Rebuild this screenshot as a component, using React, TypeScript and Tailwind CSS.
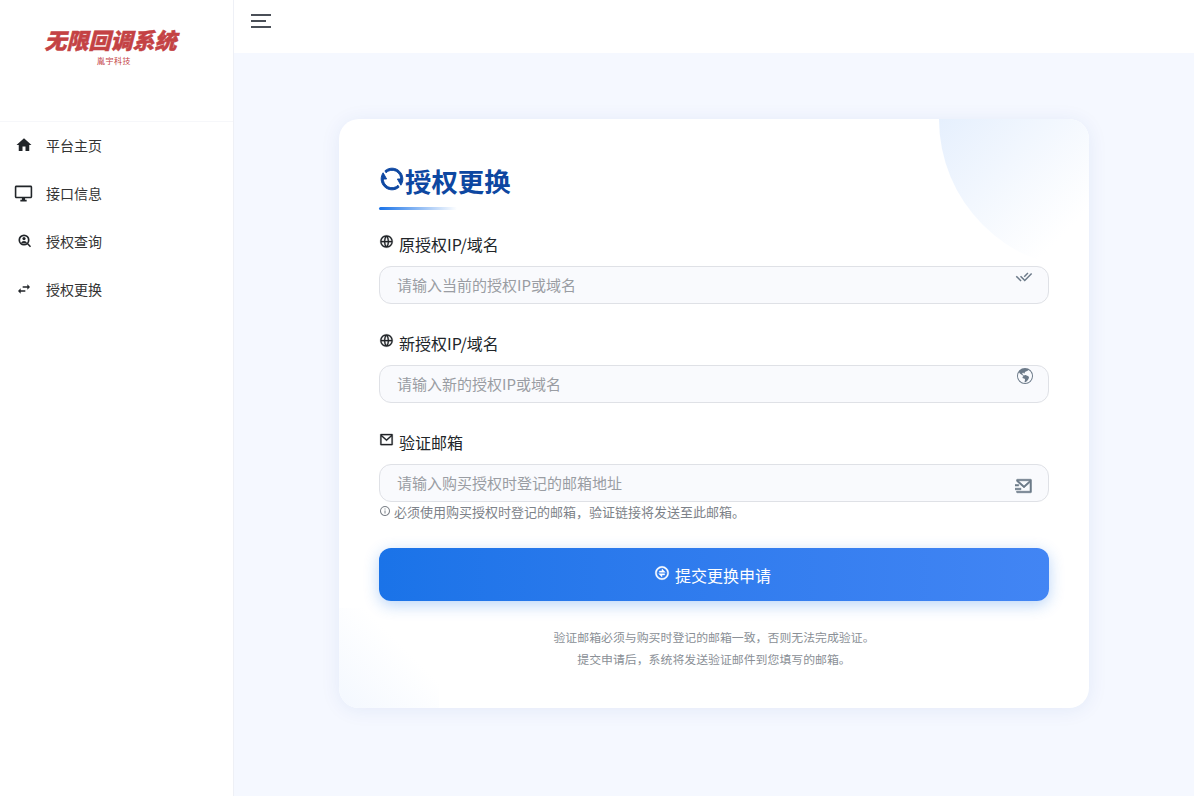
import { MdHome, MdOutlineDesktopWindows, MdSwapHoriz } from "react-icons/md"
import { BsGlobeAmericas } from "react-icons/bs"
import {
  RiRefreshLine,
  RiGlobalLine,
  RiMailLine,
  RiCheckDoubleLine,
  RiMailSendLine,
  RiInformationLine,
  RiExchangeLine,
} from "react-icons/ri"

const cjk = "font-['Noto_Sans_CJK_SC','Noto_Sans',sans-serif]"

function UserSearchIcon({ className }: { className?: string }) {
  return (
    <svg viewBox="0 0 16 16" className={className}>
      <circle cx="8" cy="7" r="4.7" fill="none" stroke="currentColor" strokeWidth="1.7" />
      <circle cx="8" cy="5.6" r="1.6" fill="currentColor" />
      <path d="M5 10.300c.4-1.500 1.600-2.200 3-2.200s2.600.7 3 2.200z" fill="currentColor" />
      <path d="M11.400 10.400l3.100 3.300" fill="none" stroke="currentColor" strokeWidth="1.500" />
    </svg>
  )
}

const navItems = [
  { label: "平台主页", icon: <MdHome className="w-[18px] h-[18px]" /> },
  { label: "接口信息", icon: <MdOutlineDesktopWindows className="w-[19px] h-[19px] -ml-[1px]" /> },
  { label: "授权查询", icon: <UserSearchIcon className="w-4 h-4 -ml-[1px]" /> },
  { label: "授权更换", icon: <MdSwapHoriz className="w-4 h-4 -ml-[1px]" /> },
]

const fields = [
  {
    label: "原授权IP/域名",
    placeholder: "请输入当前的授权IP或域名",
    labelIcon: <RiGlobalLine className="w-[15px] h-[15px]" stroke="currentColor" strokeWidth={0.4} />,
    icon: <RiCheckDoubleLine className="w-[18px] h-[18px]" />,
    iconPos: "top-[1px]",
  },
  {
    label: "新授权IP/域名",
    placeholder: "请输入新的授权IP或域名",
    labelIcon: <RiGlobalLine className="w-[15px] h-[15px]" stroke="currentColor" strokeWidth={0.4} />,
    icon: <BsGlobeAmericas className="w-[16px] h-[16px] ml-[1px]" />,
    iconPos: "top-[2px]",
  },
  {
    label: "验证邮箱",
    placeholder: "请输入购买授权时登记的邮箱地址",
    labelIcon: <RiMailLine className="w-[15px] h-[15px]" stroke="currentColor" strokeWidth={0.4} />,
    icon: <RiMailSendLine className="w-[18px] h-[18px]" stroke="currentColor" strokeWidth={0.7} />,
    iconPos: "top-[12px]",
  },
]

export default function App() {
  return (
    <div className={`flex h-[796px] w-full overflow-hidden bg-[#f5f8ff] ${cjk}`}>
      {/* Sidebar */}
      <aside className="w-[234px] shrink-0 bg-white border-r border-[#eef0f6]">
        <div className="h-[122px] border-b border-[#f6f7fa] flex flex-col items-center pt-[23px] pr-[12px]">
          <div className="text-[22px] leading-[32px] font-black italic text-[#c44244] [-webkit-text-stroke:0.5px_#c44244]">无限回调系统</div>
          <div className="text-[8px] leading-[10px] mt-[1px] ml-[7px] text-[#c44244] tracking-[0.5px]">胤宇科技</div>
        </div>
        <nav className="-mt-[1px]">
          {navItems.map((item) => (
            <div key={item.label} className="h-[48px] flex items-center pl-[14px] text-[#212529]">
              <span className="w-[20px] flex justify-center">{item.icon}</span>
              <span className="ml-[12px] text-[14px] text-[#333]">{item.label}</span>
            </div>
          ))}
        </nav>
      </aside>

      <div className="flex-1 flex flex-col min-w-0">
        {/* Top bar */}
        <header className="h-[53px] bg-white shrink-0 pl-[17px] pt-[14px]">
          <div className="w-[20px] flex flex-col gap-[4px]">
            <div className="h-[2px] w-[20px] bg-[#4a4f57]" />
            <div className="h-[2px] w-[15px] bg-[#4a4f57]" />
            <div className="h-[2px] w-[20px] bg-[#4a4f57]" />
          </div>
        </header>

        {/* Form card */}
        <main className="flex-1 flex justify-center pt-[66px]">
          <div className="relative overflow-hidden w-[750px] h-[589px] bg-white rounded-[20px] shadow-[0_2px_20px_rgba(30,70,160,0.08)] px-[40px] pt-[40px]">
            <div className="absolute -top-[150px] -right-[150px] w-[300px] h-[300px] rounded-full bg-[linear-gradient(135deg,#d6e6fc_0%,#ffffff_65%)]" />
            <div className="absolute -bottom-[50px] -left-[50px] w-[150px] h-[150px] bg-[linear-gradient(45deg,#eaf2fe_0%,#ffffff_75%)]" />

            <div className="relative">
              <h1 className="flex items-center text-[26.4px] leading-[44px] font-bold text-[#0d47a1]">
                <RiRefreshLine className="w-[26px] h-[26px] -mt-[5px] text-[#0d47a1]" stroke="currentColor" strokeWidth={0.9} />
                授权更换
              </h1>
              <div className="w-[78px] h-[3px] mt-[4px] rounded-full bg-gradient-to-r from-[#1a73e8] to-[#1a73e8]/0" />

              <div className="mt-[19px] flex flex-col gap-[24px]">
                {fields.map((field) => (
                  <div key={field.label}>
                    <label className="flex items-center h-[30px] text-[16px] text-[#212529]">
                      <span className="-mt-[6px] mr-[5px]">{field.labelIcon}</span>
                      {field.label}
                    </label>
                    <div className="relative mt-[7px] h-[38px] rounded-[12px] border border-[#dfe1e6] bg-[#f9fafd] pl-[17px] flex items-center text-[15px] text-[#9a9da3]">
                      {field.placeholder}
                      <span className={`absolute right-[15px] text-[#6c7a89] ${field.iconPos}`}>{field.icon}</span>
                    </div>
                  </div>
                ))}
              </div>

              <p className="flex items-center h-[20px] mt-0 text-[13px] text-[#7d8289]">
                <RiInformationLine className="w-[12px] h-[12px] mr-[3px] -mt-[3px]" />
                必须使用购买授权时登记的邮箱，验证链接将发送至此邮箱。
              </p>

              <button className="mt-[26px] w-full h-[53px] pr-[3px] rounded-[12px] bg-gradient-to-r from-[#1a73e8] to-[#4285f4] shadow-[0_4px_15px_rgba(26,115,232,0.3)] text-white text-[16px] flex items-center justify-center">
                <RiExchangeLine className="w-4 h-4 mr-[5px] -mt-[3px]" stroke="currentColor" strokeWidth={0.6} />
                提交更换申请
              </button>

              <div className="mt-[25px] text-center text-[11.9px] leading-[22px] text-[#8a8f96]">
                <p>验证邮箱必须与购买时登记的邮箱一致，否则无法完成验证。</p>
                <p>提交申请后，系统将发送验证邮件到您填写的邮箱。</p>
              </div>
            </div>
          </div>
        </main>
      </div>
    </div>
  )
}
